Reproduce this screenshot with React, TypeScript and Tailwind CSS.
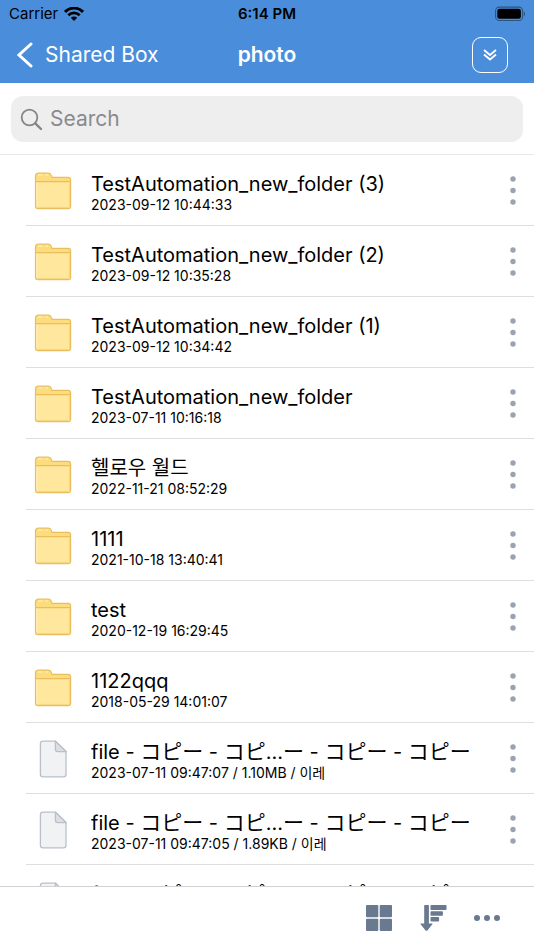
type Item = {
  kind: "folder" | "file";
  name: string;
  info: string;
};

const longName = "file - コピー - コピ...ー - コピー - コピー";

const items: Item[] = [
  { kind: "folder", name: "TestAutomation_new_folder (3)", info: "2023-09-12 10:44:33" },
  { kind: "folder", name: "TestAutomation_new_folder (2)", info: "2023-09-12 10:35:28" },
  { kind: "folder", name: "TestAutomation_new_folder (1)", info: "2023-09-12 10:34:42" },
  { kind: "folder", name: "TestAutomation_new_folder", info: "2023-07-11 10:16:18" },
  { kind: "folder", name: "헬로우 월드", info: "2022-11-21 08:52:29" },
  { kind: "folder", name: "1111", info: "2021-10-18 13:40:41" },
  { kind: "folder", name: "test", info: "2020-12-19 16:29:45" },
  { kind: "folder", name: "1122qqq", info: "2018-05-29 14:01:07" },
  { kind: "file", name: longName, info: "2023-07-11 09:47:07 / 1.10MB / 이레" },
  { kind: "file", name: longName, info: "2023-07-11 09:47:05 / 1.89KB / 이레" },
  { kind: "file", name: longName, info: "" },
];

function FolderIcon() {
  return (
    <svg width="38" height="38" viewBox="0 0 38 38" fill="none" aria-hidden="true">
      <path
        d="M1.5 10V4a2.8 2.8 0 0 1 2.8-2.8h10.2c1.6 0 2.4.9 2.8 2.2l.7 2H34a2.6 2.6 0 0 1 2.6 2.6v2Z"
        fill="#fcdc7c"
      />
      <path d="M1.5 9.6h35.1v24.6a2.4 2.4 0 0 1-2.4 2.4H3.9a2.4 2.4 0 0 1-2.4-2.4Z" fill="#ffe79d" />
      <path d="M2.8 10v24M4 3h4.5M11 3h3" stroke="#fff1c4" />
      <path d="M35.4 11v23.6M4 35.4h30" stroke="#f6d67f" />
      <path
        d="M1.5 4a2.8 2.8 0 0 1 2.8-2.8h10.2c1.6 0 2.4.9 2.8 2.2l.7 2H34a2.6 2.6 0 0 1 2.6 2.6v26.2a2.4 2.4 0 0 1-2.4 2.4H3.9a2.4 2.4 0 0 1-2.4-2.4ZM1.5 9.6h35.1"
        stroke="#e9bf5e"
        strokeWidth="1.2"
      />
    </svg>
  );
}

function FileIcon() {
  return (
    <svg width="38" height="38" viewBox="0 0 38 38" fill="none" aria-hidden="true">
      <path
        d="M9 1.2h12.4L32 11.4v22.8a2.6 2.6 0 0 1-2.6 2.6H9a2.6 2.6 0 0 1-2.6-2.6V3.8A2.6 2.6 0 0 1 9 1.2Z"
        fill="#f0f2f4"
        stroke="#b9c0c9"
        strokeWidth="1.3"
      />
      <path
        d="M21.4 1.2v8a2.4 2.4 0 0 0 2.4 2.4H32Z"
        fill="#dde0e3"
        stroke="#b9c0c9"
        strokeWidth="1.3"
        strokeLinejoin="round"
      />
    </svg>
  );
}

function StatusBar() {
  return (
    <div className="grid h-7 grid-cols-3 items-center px-[9px] text-[15px] leading-5 text-black">
      <div className="flex items-center gap-1.5">
        <span>Carrier</span>
        <svg width="20" height="14" viewBox="0 0 20 14" fill="none" aria-label="Wi-Fi">
          <path d="M1 4.9C6-.2 14-.2 19 4.9" stroke="#000" strokeWidth="2.9" />
          <path d="M4.3 8.2c3.2-3.1 8.2-3.1 11.4 0" stroke="#000" strokeWidth="2.7" />
          <path d="M10 14 6.8 10.8c1.8-1.7 4.6-1.7 6.4 0Z" fill="#000" />
        </svg>
      </div>
      <span className="text-center font-semibold">6:14 PM</span>
      <svg className="justify-self-end" width="31" height="16" viewBox="0 0 31 16" aria-label="Battery">
        <rect x="1.6" y="1.1" width="27" height="13.4" rx="3.8" fill="none" stroke="#2f5380" strokeWidth="1.1" />
        <rect x="3.3" y="2.8" width="23.6" height="10" rx="2.2" fill="#000" />
        <path d="M29.8 5.4c1.6.8 1.6 4 0 4.8Z" fill="#2f5380" />
      </svg>
    </div>
  );
}

/* Kana runs are set one pixel larger so that they balance the Latin text. */
function ItemName({ name }: { name: string }) {
  return (
    <>
      {name.split(/([\u30a0-\u30ff]+)/).map((part, index) =>
        index % 2 === 1 ? (
          <span key={index} lang="ja" className="text-[21px]">
            {part}
          </span>
        ) : (
          part
        ),
      )}
    </>
  );
}

function Row({ item }: { item: Item }) {
  return (
    <li className="ml-[26px] flex h-[71px] shrink-0 items-center border-b border-[#dfdfdf] pt-0.5 pl-2">
      {item.kind === "folder" ? <FolderIcon /> : <FileIcon />}
      <div className="ml-[19px] min-w-0 flex-1 pt-[3px] text-black">
        <p className="h-[25px] truncate text-[20px] leading-6">
          <ItemName name={item.name} />
        </p>
        <p className="h-4 truncate text-[14px] leading-4">{item.info}</p>
      </div>
      <button type="button" aria-label={`Options for ${item.name}`} className="flex h-full w-[42px] items-center justify-center">
        <svg width="6" height="30" viewBox="0 0 6 30" fill="#9ba2b0" aria-hidden="true">
          <circle cx="3" cy="3" r="2.7" />
          <circle cx="3" cy="14.5" r="2.7" />
          <circle cx="3" cy="26" r="2.7" />
        </svg>
      </button>
    </li>
  );
}

export default function App() {
  return (
    <div className="flex h-screen flex-col overflow-hidden bg-white font-[Inter,'Noto_Sans_CJK_KR','Noto_Sans_CJK_JP',sans-serif]">
      <header className="h-[83px] shrink-0 bg-[#4a8edb]">
        <StatusBar />
        <div className="grid h-[53px] grid-cols-[1fr_auto_1fr] items-center px-4 text-white">
          <button type="button" className="flex items-center gap-[11px] justify-self-start text-[21px] leading-7">
            <svg width="18" height="26" viewBox="0 0 18 26" fill="none" aria-hidden="true">
              <path d="M15 2 3 13l12 11" stroke="#fff" strokeWidth="3" strokeLinecap="round" />
            </svg>
            Shared Box
          </button>
          <h1 className="text-[21px] leading-7 font-semibold">photo</h1>
          <button
            type="button"
            aria-label="Expand"
            className="mr-2.5 flex size-9 items-center justify-center justify-self-end rounded-[9px] border border-white"
          >
            <svg width="14" height="12" viewBox="0 0 14 12" fill="none" stroke="#fff" strokeWidth="1.8" aria-hidden="true">
              <path d="m1 1 6 5 6-5M1 5.5l6 5 6-5" />
            </svg>
          </button>
        </div>
      </header>

      <div className="shrink-0 border-b border-[#e8e8e8] px-[11px] pt-[13px] pb-3">
        <label className="flex h-[46px] items-center gap-[7px] rounded-xl bg-[#eeeeee] pl-[9px]">
          <svg width="23" height="23" viewBox="0 0 23 23" fill="none" stroke="#85858a" aria-hidden="true">
            <circle cx="9.5" cy="9.5" r="7.8" strokeWidth="1.8" />
            <path d="m15.3 15.3 5.7 5.7" strokeWidth="2.4" strokeLinecap="round" />
          </svg>
          <input
            type="text"
            aria-label="Search"
            placeholder="Search"
            className="min-w-0 flex-1 bg-transparent text-[21px] leading-7 outline-none placeholder:text-[#8a8a8e]"
          />
        </label>
      </div>

      <ul className="flex min-h-0 flex-1 flex-col overflow-hidden">
        {items.map((item, index) => (
          <Row key={index} item={item} />
        ))}
      </ul>

      <footer className="flex h-16 shrink-0 items-center justify-end gap-[26px] border-t border-[#d2d2d4] bg-white pr-[33px] pb-0.5 text-[#69798f]">
        <button type="button" aria-label="Grid view">
          <svg width="28" height="28" viewBox="0 0 28 28" fill="currentColor" aria-hidden="true">
            <rect x="1" y="1" width="12.3" height="12.3" rx="1" />
            <rect x="14.7" y="1" width="12.3" height="12.3" rx="1" />
            <rect x="1" y="14.7" width="12.3" height="12.3" rx="1" />
            <rect x="14.7" y="14.7" width="12.3" height="12.3" rx="1" />
          </svg>
        </button>
        <button type="button" aria-label="Sort">
          <svg width="28" height="28" viewBox="0 0 28 28" fill="currentColor" aria-hidden="true">
            <path d="M5.2 1.6q0-.6.6-.6h3.5q.6 0 .6.6v18h3.2q.8 0 .3.6l-5 6.2q-.9.9-1.800 0l-5-6.2q-.5-.6.3-.6h3.3Z" />
            <rect x="11.5" y="1" width="16" height="5" rx=".8" />
            <rect x="11.5" y="7.2" width="12.4" height="4.6" rx=".8" />
            <rect x="11.5" y="13" width="8.6" height="4.6" rx=".8" />
          </svg>
        </button>
        <button type="button" aria-label="More">
          <svg width="28" height="28" viewBox="0 0 28 28" fill="currentColor" aria-hidden="true">
            <circle cx="4" cy="14" r="3" />
            <circle cx="14" cy="14" r="3" />
            <circle cx="24" cy="14" r="3" />
          </svg>
        </button>
      </footer>
    </div>
  );
}
